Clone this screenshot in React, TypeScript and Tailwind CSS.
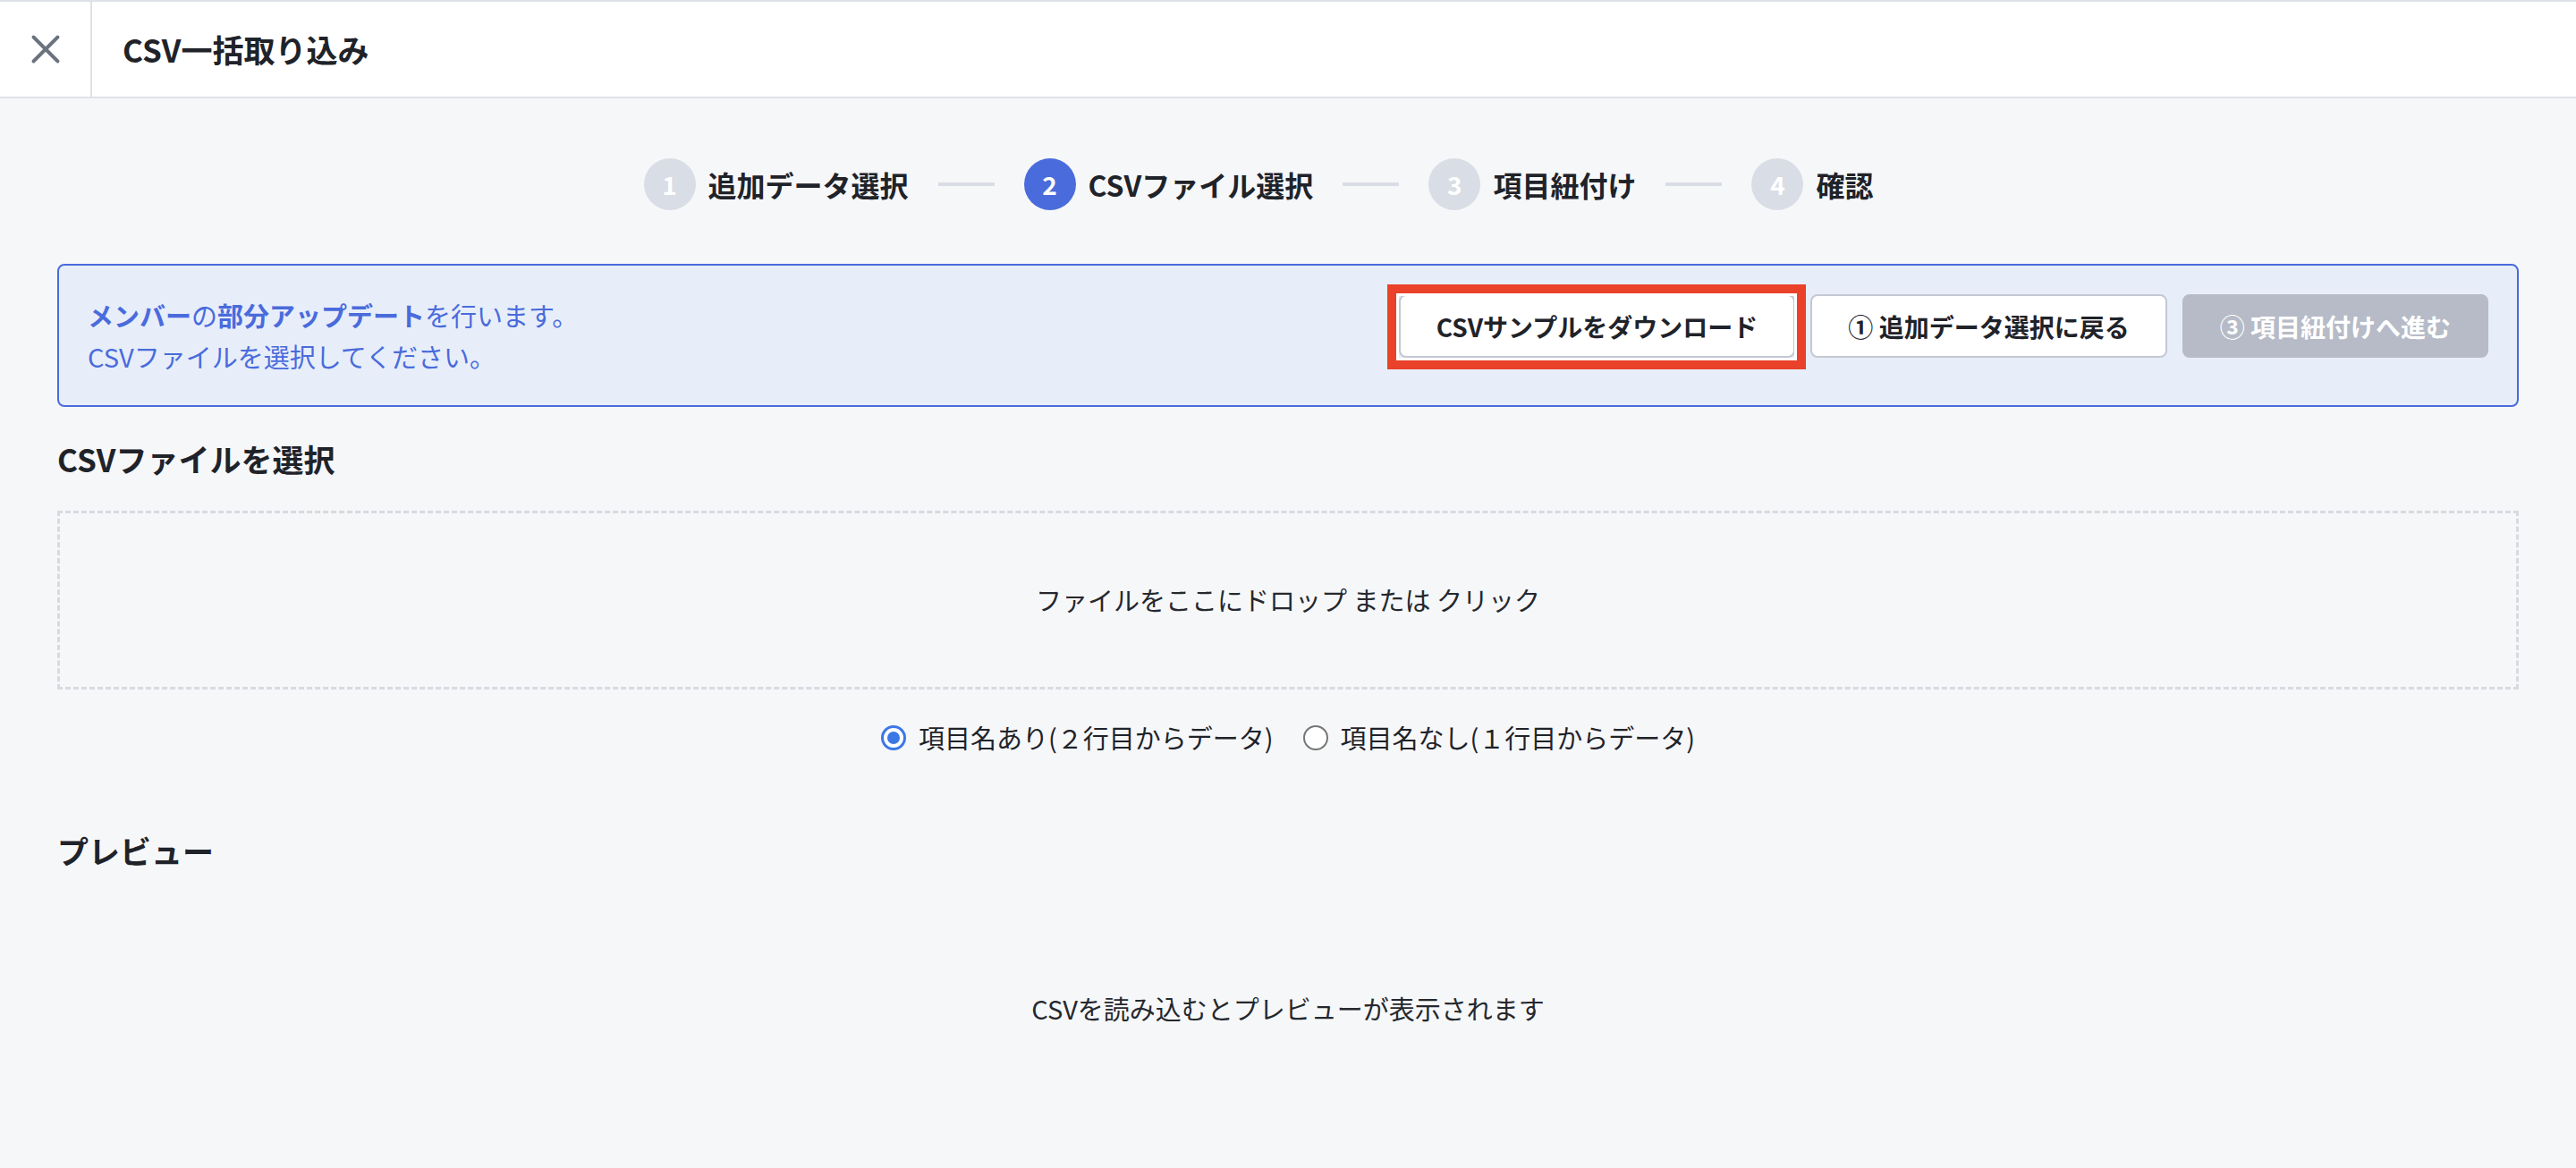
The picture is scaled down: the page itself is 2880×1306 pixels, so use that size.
import React from "react";

const font = { fontFamily: '"Noto Sans CJK JP", "Noto Sans", sans-serif' };

function Step({ n, label, active }: { n: number; label: string; active?: boolean }) {
  return (
    <div className="flex items-center gap-[14px]">
      <div
        className={
          active
            ? "w-[58px] h-[58px] rounded-full bg-[#4a6bdc] flex items-center justify-center text-white text-[28px] font-bold"
            : "w-[58px] h-[58px] rounded-full bg-[#d9dde5] flex items-center justify-center text-white text-[28px] font-bold"
        }
      >
        {n}
      </div>
      <span className="text-[32px] font-bold text-[#1f2329] leading-[40px]">{label}</span>
    </div>
  );
}

function Line() {
  return <div className="w-[63px] h-[4px] bg-[#d9dde5] mx-[33px]" />;
}

export default function App() {
  return (
    <div className="min-h-screen bg-[#f6f7f9]" style={font}>
      {/* Header */}
      <div className="h-[110px] bg-white border-t-2 border-b-2 border-[#dfe2e8] flex items-stretch">
        <div className="w-[103px] border-r-2 border-[#dfe2e8] flex items-center justify-center">
          <svg width="36" height="36" viewBox="0 0 24 24" fill="none" stroke="#6b7280" strokeWidth="2.6" strokeLinecap="round">
            <path d="M3 3 21 21" />
            <path d="M21 3 3 21" />
          </svg>
        </div>
        <div className="flex items-center pl-[34px]">
          <span className="text-[35px] font-bold text-[#1f2329]">CSV一括取り込み</span>
        </div>
      </div>

      {/* Stepper */}
      <div className="flex items-center justify-center pt-[67px] pr-[66px]">
        <Step n={1} label="追加データ選択" />
        <Line />
        <Step n={2} label="CSVファイル選択" active />
        <Line />
        <Step n={3} label="項目紐付け" />
        <Line />
        <Step n={4} label="確認" />
      </div>

      <div className="px-[64px]">
        {/* Info box */}
        <div className="mt-[60px] border-2 border-[#4a6bdc] rounded-[8px] bg-[#e7eef9] p-[32px] flex items-start justify-between">
          <div className="text-[29px] leading-[46px] text-[#4a6bdc]">
            <div>
              <span className="font-bold">メンバー</span>の<span className="font-bold">部分アップデート</span>を行います。
            </div>
            <div>CSVファイルを選択してください。</div>
          </div>
          <div className="flex items-start gap-[17px]">
            <div className="relative">
              <button className="h-[71px] px-[40px] rounded-[8px] border-2 border-[#c3c8d2] bg-white text-[28px] font-bold text-[#1f2329]">
                CSVサンプルをダウンロード
              </button>
              <div className="absolute -left-[13px] -right-[12px] -top-[11px] -bottom-[13px] border-[10px] border-[#e9412a] pointer-events-none">
                <div className="w-full h-full border-[3px] border-white" />
              </div>
            </div>
            <button className="h-[71px] px-[40px] rounded-[8px] border-2 border-[#c3c8d2] bg-white text-[28px] font-bold text-[#1f2329]">
              ① 追加データ選択に戻る
            </button>
            <button className="h-[71px] px-[40px] rounded-[8px] border-2 border-[#b6bbc7] bg-[#b6bbc7] text-[28px] font-bold text-white">
              ③ 項目紐付けへ進む
            </button>
          </div>
        </div>

        {/* CSV file select */}
        <h2 className="mt-[30px] text-[35px] leading-[56px] font-bold text-[#1f2329]">CSVファイルを選択</h2>
        <div className="mt-[30px] h-[200px] border-[3px] border-dashed border-[#d6dae1] flex items-center justify-center">
          <span className="text-[29px] text-[#25282d]">ファイルをここにドロップ または クリック</span>
        </div>

        {/* Radios */}
        <div className="mt-[34px] h-[40px] flex items-center justify-center">
          <label className="flex items-center gap-[14px]">
            <span className="w-[28px] h-[28px] rounded-full border-[3px] border-[#3b78e7] bg-white flex items-center justify-center">
              <span className="w-[14px] h-[14px] rounded-full bg-[#3b78e7]" />
            </span>
            <span className="text-[29px] text-[#1f2329]">項目名あり(２行目からデータ)</span>
          </label>
          <label className="flex items-center gap-[14px] ml-[33px]">
            <span className="w-[28px] h-[28px] rounded-full border-[2px] border-[#767676] bg-white" />
            <span className="text-[29px] text-[#1f2329]">項目名なし(１行目からデータ)</span>
          </label>
        </div>

        {/* Preview */}
        <h2 className="mt-[78px] text-[35px] leading-[56px] font-bold text-[#1f2329]">プレビュー</h2>
        <div className="h-[298px] flex items-center justify-center">
          <span className="text-[29px] text-[#25282d]">CSVを読み込むとプレビューが表示されます</span>
        </div>
      </div>
    </div>
  );
}
